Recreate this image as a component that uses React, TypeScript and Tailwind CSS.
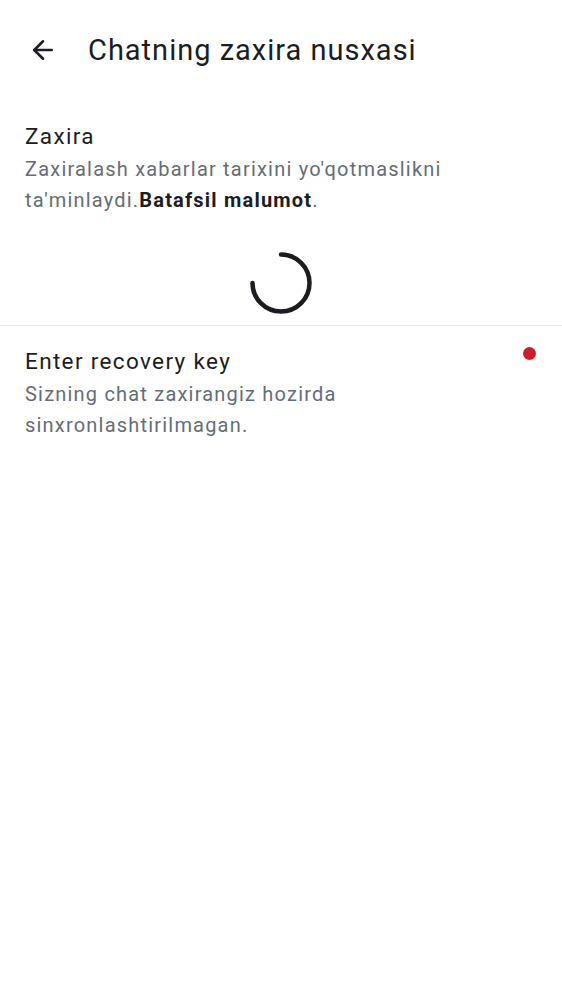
import { ArrowLeft } from 'lucide-react';

function App() {
  return (
    <div className="min-h-screen bg-white font-['Roboto',sans-serif] text-[#1b1d22]">
      {/* Header */}
      <div className="flex h-[100px] items-center pl-[28px]">
        <ArrowLeft className="h-[30px] w-[30px]" strokeWidth={2} />
        <h1 className="ml-[30px] text-[29px] leading-none tracking-[1px]">Chatning zaxira nusxasi</h1>
      </div>

      {/* Zaxira */}
      <div className="px-[25px] pt-[19px]">
        <h2 className="text-[22.5px] leading-[35px] tracking-[1.35px]">Zaxira</h2>
        <p className="text-[20px] leading-[31px] tracking-[1.2px] text-[#656d77]">
          Zaxiralash xabarlar tarixini yo'qotmaslikni
          <br />
          ta'minlaydi.<span className="font-bold text-[#1b1d22]">Batafsil malumot</span>.
        </p>
      </div>

      <div className="flex justify-center pb-[10px] pt-[35px]">
        <svg width="64" height="64" viewBox="0 0 64 64" fill="none">
          <path d="M32 3.5 A28.5 28.5 0 1 1 3.5 32" stroke="#1b1d22" strokeWidth="4.5" strokeLinecap="round" />
        </svg>
      </div>

      <div className="h-px bg-[#e6e7ea]" />

      {/* Recovery key */}
      <div className="flex items-start justify-between pl-[25px] pr-[26px] pt-[18px]">
        <div>
          <h2 className="text-[22.5px] leading-[35px] tracking-[1.35px]">Enter recovery key</h2>
          <p className="text-[20px] leading-[31px] tracking-[1.2px] text-[#656d77]">
            Sizning chat zaxirangiz hozirda
            <br />
            sinxronlashtirilmagan.
          </p>
        </div>
        <span className="mt-[3px] h-[13px] w-[13px] rounded-full bg-[#d51928]" />
      </div>
    </div>
  );
}

export default App;
